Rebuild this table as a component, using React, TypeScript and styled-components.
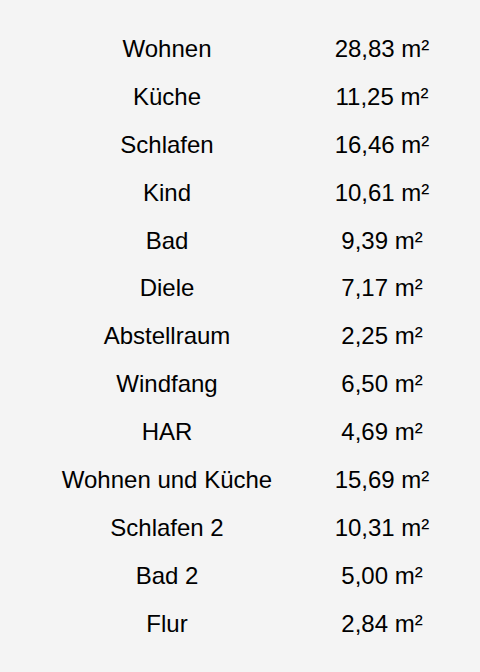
import { Fragment } from 'react';
import styled, { createGlobalStyle } from 'styled-components';

const rooms = [
  { name: 'Wohnen', area: '28,83' },
  { name: 'Küche', area: '11,25' },
  { name: 'Schlafen', area: '16,46' },
  { name: 'Kind', area: '10,61' },
  { name: 'Bad', area: '9,39' },
  { name: 'Diele', area: '7,17' },
  { name: 'Abstellraum', area: '2,25' },
  { name: 'Windfang', area: '6,50' },
  { name: 'HAR', area: '4,69' },
  { name: 'Wohnen und Küche', area: '15,69' },
  { name: 'Schlafen 2', area: '10,31' },
  { name: 'Bad 2', area: '5,00' },
  { name: 'Flur', area: '2,84' },
];

const GlobalStyle = createGlobalStyle`
  html, body {
    margin: 0;
    padding: 0;
    background: #f4f4f4;
  }
  body {
    font-family: 'Liberation Sans', Arial, sans-serif;
    color: #000;
  }
`;

const RoomTable = styled.div`
  display: grid;
  grid-template-columns: 286px 144px;
  grid-auto-rows: 47.9px;
  padding: 25px 26px 23px 24px;
`;

const Cell = styled.div`
  display: flex;
  align-items: center;
  justify-content: center;
  font-size: 24px;
  white-space: nowrap;
`;

const App = () => {
  return (
    <>
      <GlobalStyle />
      <RoomTable>
        {rooms.map((room) => (
          <Fragment key={room.name}>
            <Cell>{room.name}</Cell>
            <Cell>{room.area} m²</Cell>
          </Fragment>
        ))}
      </RoomTable>
    </>
  );
};

export default App;
